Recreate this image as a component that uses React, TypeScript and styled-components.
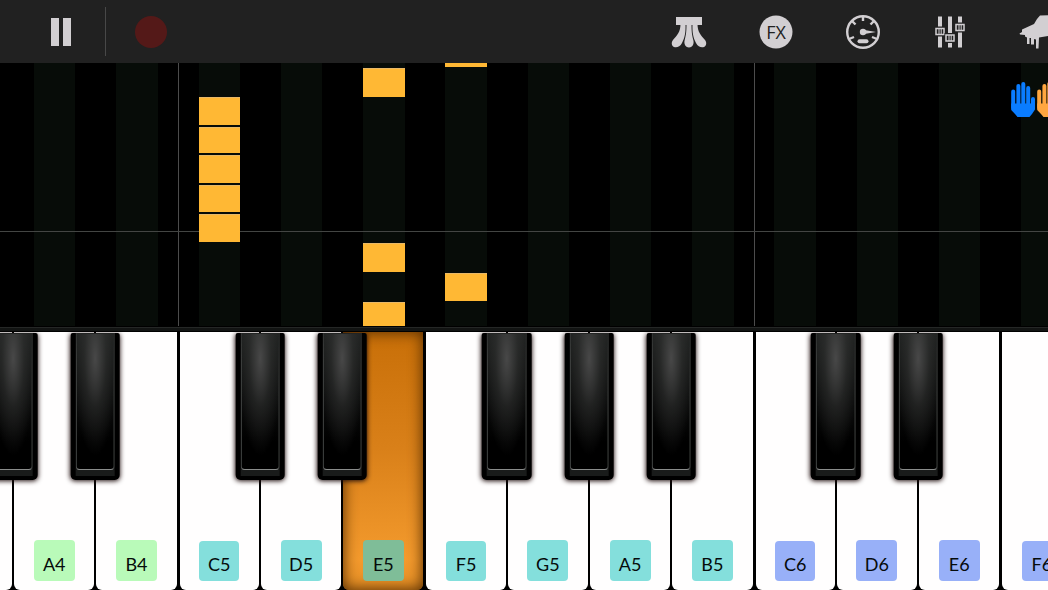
import React from "react";
import styled, { createGlobalStyle, css } from "styled-components";

const GlobalStyle = createGlobalStyle`
  * { box-sizing: border-box; }
  html, body { margin: 0; background: #000; overflow: hidden; }
  button { border: 0; padding: 0; background: none; font: inherit; color: inherit; cursor: pointer; }
`;

const KEY_WIDTH = "7.85%";
const FIRST_KEY_OFFSET = "-6.6%";

const Screen = styled.main`
  display: grid;
  grid-template-rows: 63px minmax(0, 263fr) 6px minmax(0, 258fr);
  height: 100vh;
  background: #000;
  font-family: Lato, "Open Sans", sans-serif;
`;

const Toolbar = styled.header`
  display: flex;
  justify-content: space-between;
  overflow: hidden;
  background: #212121;
  color: #d2cfd2;
`;

const ToolGroup = styled.div<{ $end?: boolean }>`
  display: flex;
  align-items: center;
  flex-shrink: 0;
  ${(p) => (p.$end ? css`margin-right: -32px;` : css`padding-left: 16px;`)}
`;

const ToolButton = styled.button`
  display: flex;
  align-items: center;
  justify-content: center;
  width: 87px;
  height: 63px;
  flex-shrink: 0;
  svg { display: block; width: 36px; height: 36px; }
`;

const TransportButton = styled(ToolButton)`
  width: 89px;
  gap: 4px;
`;

const PauseBar = styled.span`
  width: 8px;
  height: 28px;
  background: #d2cfd2;
`;

const Divider = styled.span`
  width: 1px;
  height: 49px;
  background: #484848;
`;

const RecordDot = styled.span`
  width: 32px;
  height: 32px;
  border-radius: 50%;
  background: #541918;
`;

const Roll = styled.section`
  position: relative;
  display: flex;
  overflow: hidden;
  background: #000;
`;

const Lane = styled.div<{ $octave: boolean }>`
  display: flex;
  justify-content: center;
  flex: 0 0 ${KEY_WIDTH};
  border-left: 1px solid ${(p) => (p.$octave ? "#4c4c4c" : "transparent")};
  &:first-child { margin-left: ${FIRST_KEY_OFFSET}; }
`;

const Stripe = styled.div`
  position: relative;
  width: 51%;
  background: #070c08;
`;

const Note = styled.span<{ $top: number; $length: number }>`
  position: absolute;
  z-index: 1;
  left: 0;
  right: 0;
  top: ${(p) => p.$top}px;
  height: ${(p) => p.$length}px;
  background: #ffb834;
  border-top: 1px solid #e9b968;
`;

const BeatLine = styled.span`
  position: absolute;
  left: 0;
  right: 0;
  top: 168px;
  height: 1px;
  background: #434543;
`;

const Hands = styled.button`
  position: absolute;
  top: 18px;
  right: -13px;
  display: flex;
  gap: 2px;
  svg { display: block; width: 24px; height: 37px; }
`;

const Rail = styled.div`
  background: linear-gradient(#000 0 1px, #252726 1px 2px, #121413 2px 5px, #000 5px);
`;

const Keyboard = styled.section`
  display: flex;
  overflow: hidden;
  background: #000;
`;

const KeyCell = styled.div<{ $groupStart: boolean }>`
  position: relative;
  flex: 0 0 ${KEY_WIDTH};
  padding: 0 1px 0 ${(p) => (p.$groupStart ? 2 : 1)}px;
  &:first-child { margin-left: ${FIRST_KEY_OFFSET}; }
`;

const WhiteKey = styled.button<{ $pressed: boolean }>`
  display: flex;
  align-items: flex-end;
  justify-content: center;
  width: 100%;
  height: 100%;
  padding-bottom: 9px;
  border-radius: 0 0 6px 6px;
  background: #fffefe;
  ${(p) =>
    p.$pressed &&
    css`
      background: linear-gradient(#c86f08, #d98019 45%, #f39a2d 88%, #e48e25);
      box-shadow: inset 0 0 14px 1px #5b3103;
    `}
`;

const KeyLabel = styled.span<{ $color: string }>`
  display: flex;
  align-items: center;
  justify-content: center;
  width: 51%;
  aspect-ratio: 1;
  padding-top: 6px;
  border-radius: 4px;
  background: ${(p) => p.$color};
  color: #060b0b;
  font-size: 18px;
  line-height: 20px;
`;

const BlackKey = styled.button`
  position: absolute;
  z-index: 1;
  top: 1px;
  right: 0;
  transform: translateX(50%);
  display: flex;
  width: 60%;
  height: 57%;
  padding: 0 5px 4px;
  border-radius: 2px 2px 5px 5px;
  background: #000;
  box-shadow: 0 1px 5px #1c0b0b;
`;

const BlackKeyFoot = styled.span`
  display: flex;
  flex: 1;
  height: 100%;
  padding-bottom: 6px;
  background: #191b1a;
`;

const BlackKeyFace = styled.span`
  flex: 1;
  border: 1px solid #4c4e4d;
  border-top-color: #222423;
  border-bottom-color: #8a8c8b;
  border-radius: 0 0 4px 4px;
  background:
    radial-gradient(ellipse 60% 72% at 50% 18%, #484848, #36373680 50%, transparent 100%),
    linear-gradient(#1e201f, #000 80%);
`;

const octaveColors: Record<string, string> = { "4": "#b9fab9", "5": "#84dfdc", "6": "#98b0f8" };
const PRESSED_LABEL = "#7fbd98";

type KeyData = {
  name: string;
  sharp?: boolean;
  pressed?: boolean;
  unlabeled?: boolean;
  notes?: [number, number][];
};

const keys: KeyData[] = [
  { name: "G4", sharp: true, unlabeled: true },
  { name: "A4", sharp: true },
  { name: "B4" },
  { name: "C5", sharp: true, notes: [[34, 28], [64, 26], [92, 28], [122, 27], [151, 28]] },
  { name: "D5", sharp: true },
  { name: "E5", pressed: true, notes: [[5, 29], [180, 29], [239, 24]] },
  { name: "F5", sharp: true, notes: [[-24, 28], [210, 28]] },
  { name: "G5", sharp: true },
  { name: "A5", sharp: true },
  { name: "B5" },
  { name: "C6", sharp: true },
  { name: "D6", sharp: true },
  { name: "E6" },
  { name: "F6", sharp: true },
];

const PedalIcon = () => (
  <svg viewBox="0 0 36 36" fill="currentColor" aria-hidden="true">
    <path d="M5 3h26v8H5z" />
    <path d="M9.500 10h5c.3 8-.5 13-3.500 19-2 4-5.500 5-8 4s-3-4.500-1-7c4-4.500 7.500-8 7.500-16z" />
    <path d="M26.500 10h-5c-.3 8 .5 13 3.500 19 2 4 5.500 5 8 4s3-4.500 1-7c-4-4.500-7.500-8-7.500-16z" />
    <path d="M15.500 10h5c0 7 .3 10 1.800 16 1.200 4.500-1.300 7.500-4.300 7.500s-5.500-3-4.300-7.500c1.500-6 1.800-9 1.800-16z" />
  </svg>
);

const FxIcon = () => (
  <svg viewBox="0 0 36 36" aria-hidden="true">
    <circle cx="18" cy="18" r="16.500" fill="currentColor" />
    <text x="18" y="25" textAnchor="middle" fontFamily="Open Sans, sans-serif" fontSize="18" fill="#212121">
      FX
    </text>
  </svg>
);

const MeterIcon = () => (
  <svg viewBox="0 0 36 36" fill="none" stroke="currentColor" strokeWidth="2.400" aria-hidden="true">
    <circle cx="18" cy="18" r="15.800" />
    <path d="M18 2v5M6.500 6.500l4 4M29.500 6.500l-4 4M4 25l5-2M32 25l-5-2" />
    <circle cx="18" cy="18" r="3.200" fill="currentColor" stroke="none" />
    <path d="M18 15.800l13 2.200-13 2.200z" fill="currentColor" stroke="none" />
    <path d="M14.500 27.200h7" strokeWidth="4" strokeLinecap="round" />
  </svg>
);

const MixerIcon = () => (
  <svg viewBox="0 0 36 36" fill="currentColor" aria-hidden="true">
    <path d="M6 2.500h4v31H6zM16 2.500h4v31h-4zM26 2.500h4v31h-4z" />
    {[[8, 17.5], [18, 24], [28, 13.5]].map(([x, y]) => (
      <g key={x}>
        <rect x={x - 5.5} y={y - 5} width="11" height="10" fill="#212121" />
        <rect x={x - 4} y={y - 3} width="8" height="6" fill="none" stroke="currentColor" strokeWidth="1.500" />
        <path d={`M${x - 1} ${y - 3}v6M${x + 1.2} ${y - 3}v6`} stroke="currentColor" />
      </g>
    ))}
  </svg>
);

const PianoIcon = () => (
  <svg viewBox="0 0 36 36" fill="currentColor" aria-hidden="true">
    <path d="M.5 19.500L3 18v-2.500L15 10l3-5 3-3.500L36 1v17l-7 4-9 1.500-.5 11H17v-9l-2-.5v5.500h-3V24h-1.500v6H8v-6.500l-2-1v-1.500L1 20.500z" />
  </svg>
);

const HandIcon = ({ color }: { color: string }) => (
  <svg viewBox="0 0 24 37" aria-hidden="true">
    <path
      d="M2.200 10.500v16M7.400 5v21M12.300 3v22M17.200 7v20M22 18v8"
      stroke={color}
      strokeWidth="4"
      strokeLinecap="round"
    />
    <path d="M.2 22.500h19.500l1-1.500H24v7.500l-3 4.500-2.500 3H6.500L4 33 .2 29z" fill={color} />
  </svg>
);

const tools = [
  { label: "Pedal", Icon: PedalIcon },
  { label: "Effects", Icon: FxIcon },
  { label: "Tempo", Icon: MeterIcon },
  { label: "Mixer", Icon: MixerIcon },
  { label: "Instrument", Icon: PianoIcon },
];

export default function App() {
  return (
    <Screen>
      <GlobalStyle />
      <Toolbar>
        <ToolGroup>
          <TransportButton aria-label="Pause">
            <PauseBar />
            <PauseBar />
          </TransportButton>
          <Divider />
          <TransportButton aria-label="Record">
            <RecordDot />
          </TransportButton>
        </ToolGroup>
        <ToolGroup $end>
          {tools.map(({ label, Icon }) => (
            <ToolButton key={label} aria-label={label}>
              <Icon />
            </ToolButton>
          ))}
        </ToolGroup>
      </Toolbar>
      <Roll>
        {keys.map((k) => (
          <Lane key={k.name} $octave={k.name[0] === "C"}>
            <Stripe>
              {k.notes?.map(([top, length]) => (
                <Note key={top} $top={top} $length={length} />
              ))}
            </Stripe>
          </Lane>
        ))}
        <BeatLine />
        <Hands aria-label="Hands">
          <HandIcon color="#0a7cff" />
          <HandIcon color="#ffa640" />
        </Hands>
      </Roll>
      <Rail />
      <Keyboard>
        {keys.map((k) => (
          <KeyCell key={k.name} $groupStart={"CF".includes(k.name[0])}>
            <WhiteKey $pressed={!!k.pressed} aria-label={k.name}>
              {!k.unlabeled && (
                <KeyLabel $color={k.pressed ? PRESSED_LABEL : octaveColors[k.name[1]]}>{k.name}</KeyLabel>
              )}
            </WhiteKey>
            {k.sharp && (
              <BlackKey aria-label={`${k.name[0]}#${k.name[1]}`}>
                <BlackKeyFoot>
                  <BlackKeyFace />
                </BlackKeyFoot>
              </BlackKey>
            )}
          </KeyCell>
        ))}
      </Keyboard>
    </Screen>
  );
}
